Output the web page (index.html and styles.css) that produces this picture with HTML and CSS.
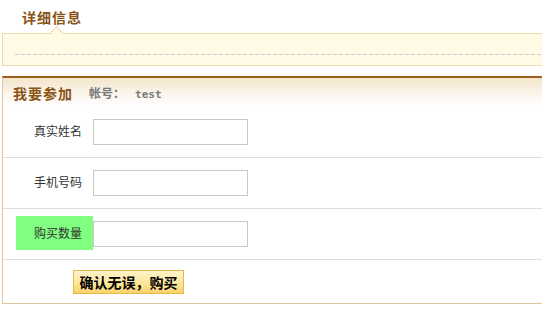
FILE: index.html
```html
<!DOCTYPE html>
<html>
<head>
<meta charset="utf-8">
<link rel="stylesheet" href="styles.css">
</head>
<body>
<div class="tab-head">
  <span class="tab-title">详细信息</span>
</div>
<div class="notice">
  <span class="notch"></span>
  <div class="dash"></div>
</div>
<div class="panel">
  <div class="panel-head">
    <span class="panel-title">我要参加</span>
    <span class="account">帐号：<span class="acc-name">test</span></span>
  </div>
  <div class="row">
    <label class="lbl">真实姓名</label>
    <input class="field" type="text">
  </div>
  <div class="row">
    <label class="lbl">手机号码</label>
    <input class="field" type="text">
  </div>
  <div class="row">
    <label class="lbl lbl-hl">购买数量</label>
    <input class="field" type="text">
  </div>
  <div class="row row-btn">
    <button class="btn" type="button">确认无误，购买</button>
  </div>
</div>
</body>
</html>
```
FILE: styles.css
```css
html, body {
  margin: 0;
  padding: 0;
  background: #fff;
  overflow: hidden;
}
body {
  font-family: "Noto Sans CJK SC", "Liberation Sans", sans-serif;
  font-size: 12px;
  color: #333;
  width: 542px;
}
.tab-head {
  height: 33px;
  padding-left: 22px;
  box-sizing: border-box;
  padding-top: 7px;
}
.tab-title {
  font-size: 14px;
  letter-spacing: 1px;
  font-weight: bold;
  color: #8a5315;
  line-height: 20px;
}
.notice {
  position: relative;
  margin-left: 2px;
  height: 31px;
  border: 1px solid #ecdca8;
  border-right: none;
  background: #fefae6;
}
.notch {
  position: absolute;
  left: 49px;
  top: -6px;
  width: 8px;
  height: 8px;
  background: #fefae6;
  border-left: 1px solid #ecdca8;
  border-top: 1px solid #ecdca8;
  transform: rotate(45deg);
}
.dash {
  margin-left: 12px;
  margin-top: 20px;
  height: 1px;
  background: repeating-linear-gradient(to right, #cccccc 0, #cccccc 4px, transparent 4px, transparent 6px);
}
.panel {
  margin-top: 10px;
  margin-left: 2px;
  border-left: 1px solid #e2c49e;
  border-top: 2px solid #9c5f22;
  border-bottom: 1px solid #e2c49e;
}
.panel-head {
  height: 29px;
  display: flex;
  align-items: center;
  padding-left: 10px;
  background: linear-gradient(to bottom, #f4e5cb 0%, #fbf5ec 55%, #ffffff 100%);
}
.panel-title {
  font-size: 14px;
  letter-spacing: 1px;
  font-weight: bold;
  color: #8a5315;
  margin-right: 16px;
}
.account {
  font-size: 12px;
  font-weight: bold;
  color: #7a7a7a;
}
.acc-name {
  font-family: "DejaVu Sans Mono", monospace;
  font-size: 11px;
  margin-left: 10px;
}
.row {
  height: 50px;
  border-bottom: 1px solid #dddddd;
  display: flex;
  align-items: center;
  padding-left: 13px;
}
.row:last-child {
  border-bottom: none;
}
.lbl {
  width: 77px;
  height: 34px;
  box-sizing: border-box;
  padding-right: 11px;
  text-align: right;
  line-height: 34px;
  color: #333;
  margin-top: -2px;
}
.lbl-hl {
  background: #80ff80;
}
.field {
  width: 155px;
  height: 26px;
  box-sizing: border-box;
  border: 1px solid #c8c8c8;
  margin: 0;
  padding: 0 4px;
  background: #fff;
}
.row-btn {
  height: 43px;
  padding-left: 70px;
  align-items: flex-start;
  padding-top: 10px;
  box-sizing: border-box;
}
.btn {
  width: 111px;
  height: 24px;
  border: 1px solid #e6b847;
  background: linear-gradient(to bottom, #fff4cc 0%, #fde69a 55%, #f9d26a 100%);
  font-family: "Noto Sans CJK SC", sans-serif;
  font-size: 14px;
  font-weight: bold;
  color: #000;
  padding: 0;
  line-height: 22px;
  margin: 0;
}
```
